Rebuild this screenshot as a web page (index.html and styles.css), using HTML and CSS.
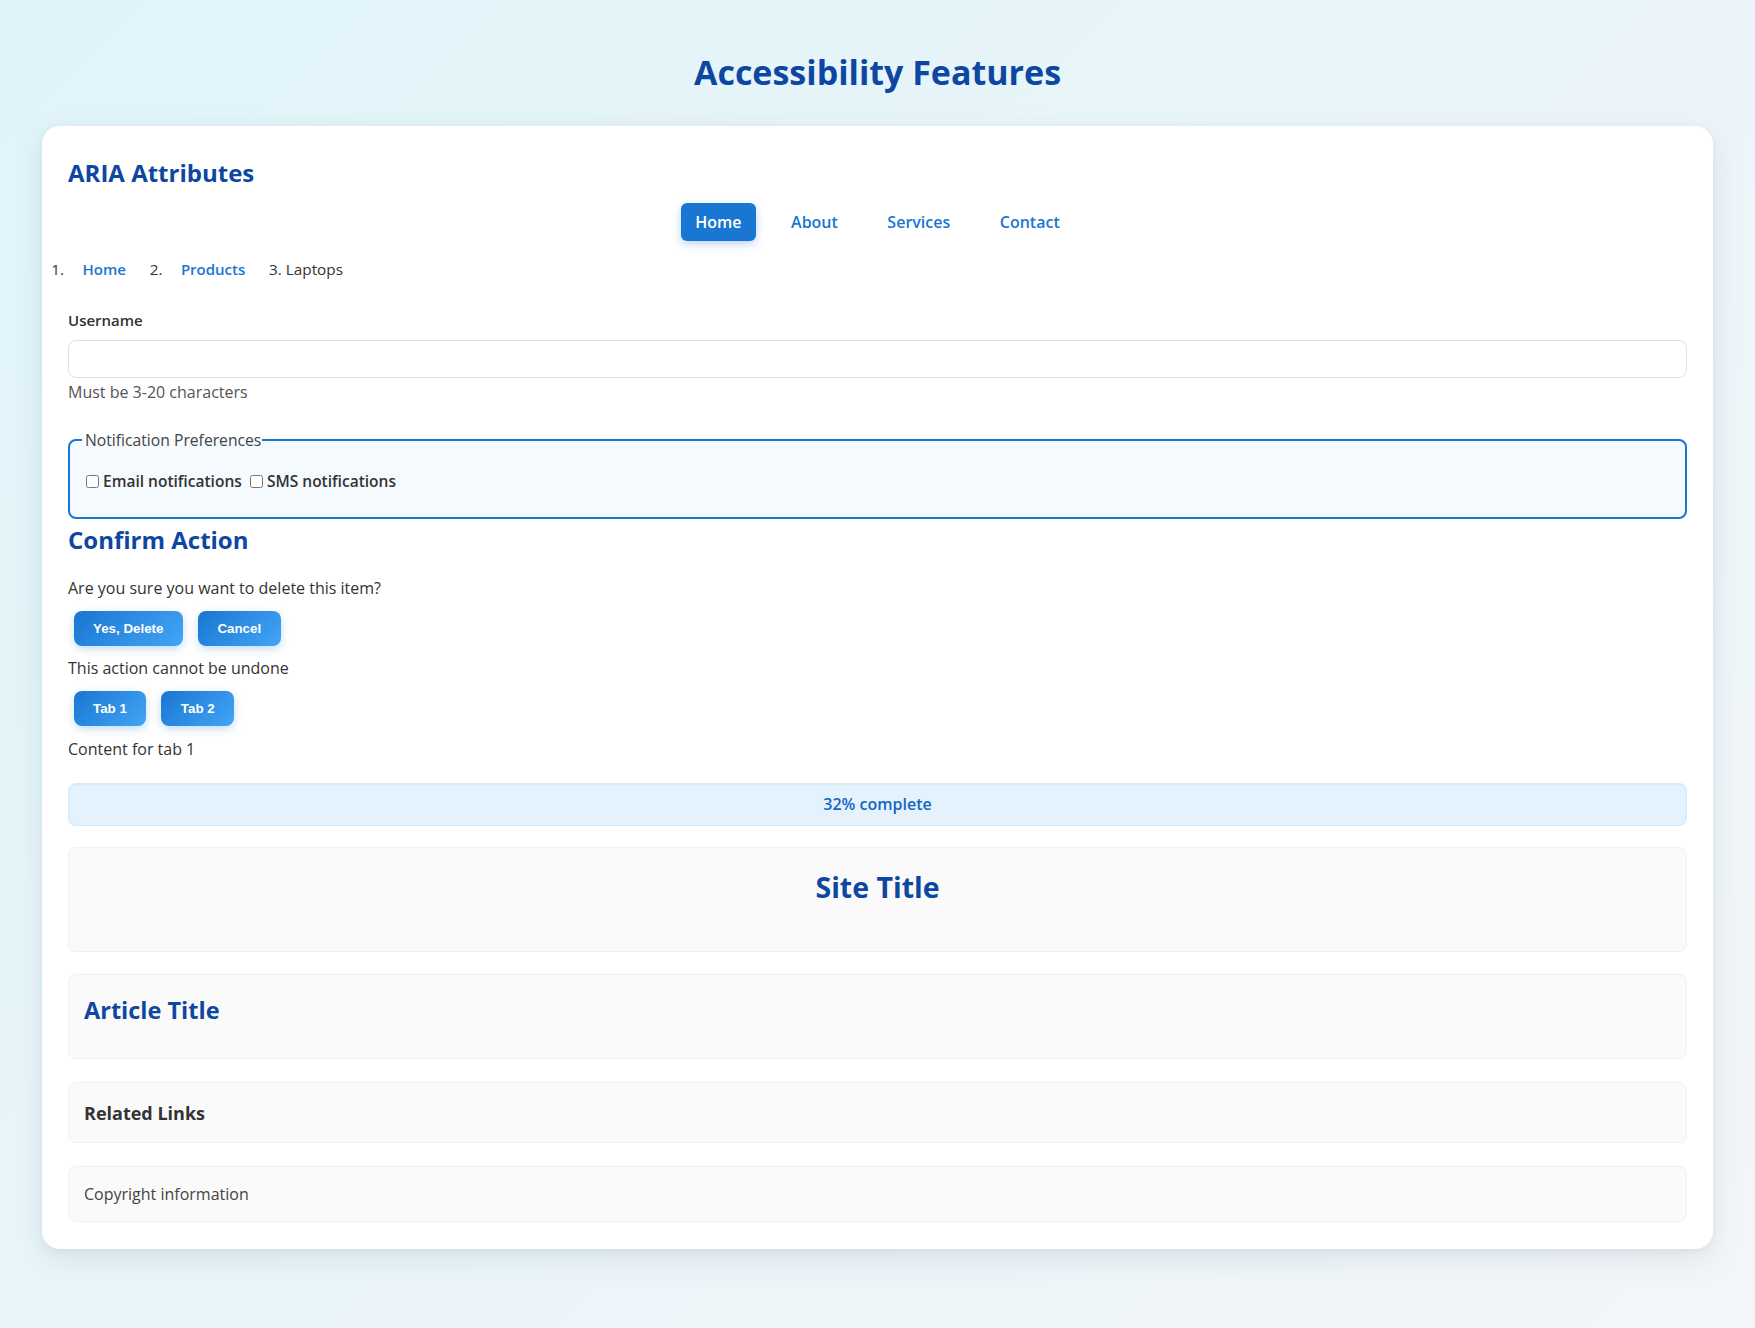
FILE: index.html
```html
<!DOCTYPE html>
<html lang="en">
<head>
<meta charset="utf-8">
<title>Accessibility Features</title>
<link rel="stylesheet" href="styles.css">
</head>
<body>
<h1 class="page-title">Accessibility Features</h1>
<main class="card">
  <h2 class="section-title">ARIA Attributes</h2>
  <nav class="main-nav" aria-label="Main navigation">
    <a class="nav-link active" href="#" aria-current="page">Home</a>
    <a class="nav-link" href="#">About</a>
    <a class="nav-link" href="#">Services</a>
    <a class="nav-link" href="#">Contact</a>
  </nav>
  <nav aria-label="Breadcrumb">
    <ol class="breadcrumb">
      <li><a class="crumb-link" href="#">Home</a></li>
      <li><a class="crumb-link" href="#">Products</a></li>
      <li><span aria-current="page">Laptops</span></li>
    </ol>
  </nav>
  <div class="form-group">
    <label class="field-label" for="username">Username</label>
    <input class="text-input" id="username" type="text" aria-describedby="username-hint">
    <div class="hint" id="username-hint">Must be 3-20 characters</div>
  </div>
  <fieldset class="prefs">
    <legend class="prefs-legend">Notification Preferences</legend>
    <div class="check-row">
      <input class="check" type="checkbox" id="email"><label class="check-label" for="email">Email notifications</label>
      <input class="check" type="checkbox" id="sms"><label class="check-label" for="sms">SMS notifications</label>
    </div>
  </fieldset>
  <div role="alertdialog" aria-labelledby="dlg-title" aria-describedby="dlg-desc">
    <h2 class="section-title confirm-title" id="dlg-title">Confirm Action</h2>
    <p class="text para-1" id="dlg-desc">Are you sure you want to delete this item?</p>
    <div class="btn-row">
      <button class="btn">Yes, Delete</button>
      <button class="btn">Cancel</button>
    </div>
    <p class="text para-2">This action cannot be undone</p>
  </div>
  <div class="btn-row tabs" role="tablist">
    <button class="btn" role="tab" aria-selected="true">Tab 1</button>
    <button class="btn" role="tab" aria-selected="false">Tab 2</button>
  </div>
  <p class="text para-3" role="tabpanel">Content for tab 1</p>
  <div class="progress" role="progressbar" aria-valuenow="32" aria-valuemin="0" aria-valuemax="100">32% complete</div>
  <header class="box site-header">
    <h1 class="site-title">Site Title</h1>
  </header>
  <article class="box article">
    <h2 class="article-title">Article Title</h2>
  </article>
  <aside class="box related">
    <h3 class="related-title">Related Links</h3>
  </aside>
  <footer class="box site-footer">Copyright information</footer>
</main>
</body>
</html>
```

FILE: styles.css
```css
html, body {
  margin: 0;
}
body {
  min-height: 1328px;
  box-sizing: border-box;
  padding: 0 42px 40px;
  background: linear-gradient(135deg, #dff4f9 0%, #eaf5f9 50%, #f3f6f9 100%);
  font-family: "Open Sans", "Noto Sans", sans-serif;
  font-size: 16px;
  color: #333;
}
.page-title {
  margin: 0;
  padding: 51px 0 32px;
  text-align: center;
  font-size: 34px;
  line-height: 43px;
  font-weight: 700;
  color: #0d47a1;
}
.card {
  display: block;
  background: #fff;
  border-radius: 18px;
  padding: 26px 26px 27px;
  box-shadow: 0 10px 30px rgba(40, 70, 100, 0.10), 0 2px 6px rgba(40, 70, 100, 0.05);
}
.section-title {
  margin: 6px 0 0;
  font-size: 24px;
  line-height: 30px;
  font-weight: 700;
  color: #0d47a1;
}
.main-nav {
  margin-top: 14.5px;
  display: flex;
  justify-content: center;
  gap: 21.5px;
}
.nav-link {
  display: block;
  padding: 8px 14px;
  line-height: 22px;
  font-size: 16px;
  font-weight: 600;
  color: #1976d2;
  text-decoration: none;
  border-radius: 6px;
}
.nav-link.active {
  background: #1976d2;
  color: #fff;
  box-shadow: 0 3px 8px rgba(25, 118, 210, 0.3);
}
.breadcrumb {
  margin: 17px 0 0;
  padding: 0;
  display: flex;
  gap: 26px;
  line-height: 22px;
  list-style: decimal outside;
  font-size: 15.3px;
}
.crumb-link {
  padding: 0 14.5px;
  color: #1976d2;
  font-size: 15px;
  font-weight: 600;
  text-decoration: none;
}
.form-group {
  margin-top: 29.5px;
}
.field-label {
  display: block;
  line-height: 22px;
  font-size: 15px;
  font-weight: 600;
  color: #333;
}
.text-input {
  display: block;
  box-sizing: border-box;
  width: 100%;
  height: 38px;
  margin-top: 9px;
  border: 1.5px solid #e0e0e0;
  border-radius: 8px;
  background: #fff;
  font: inherit;
}
.hint {
  margin-top: 2.5px;
  line-height: 22px;
  color: #555;
}
.prefs {
  margin: 26px 0 0;
  padding: 19px 12px 25px;
  border: 2px solid #1976d2;
  border-radius: 8px;
  background: #f5faff;
}
.prefs-legend {
  padding: 0 1px 0 3px;
  line-height: 22px;
  font-size: 15.7px;
  color: #444;
}
.check-row {
  line-height: 22px;
}
.check {
  width: 13px;
  height: 13px;
  margin: 0 4px 0 4px;
  vertical-align: -1px;
}
.check-label {
  font-size: 15.5px;
  font-weight: 600;
  color: #333;
}
.confirm-title {
  margin-top: 6.5px;
}
.text {
  margin: 0;
  line-height: 22px;
}
.para-1 { margin-top: 22px; }
.para-2 { margin-top: 11px; }
.para-3 { margin-top: 11.5px; }
.btn-row {
  display: flex;
  gap: 15px;
  padding-left: 5.5px;
  margin-top: 11.5px;
}
.tabs {
  margin-top: 12.5px;
}
.btn {
  padding: 10px 19.5px;
  border: none;
  border-radius: 8px;
  background: linear-gradient(135deg, #1976d2 0%, #42a5f5 100%);
  color: #fff;
  font-family: "Liberation Sans", Arial, sans-serif;
  font-size: 13.33px;
  line-height: 15px;
  font-weight: 700;
  box-shadow: 0 3px 8px rgba(25, 118, 210, 0.25);
}
.progress {
  margin-top: 23.5px;
  height: 42.5px;
  box-sizing: border-box;
  border: 1px solid #d6e9f8;
  border-radius: 8px;
  background: #e3f2fd;
  display: flex;
  align-items: center;
  justify-content: center;
  color: #1565c0;
  font-weight: 600;
  box-shadow: inset 0 1px 2px rgba(0, 0, 0, 0.05);
}
.box {
  display: block;
  margin-top: 21.5px;
  border: 1px solid #f0f0f0;
  border-radius: 8px;
  background: #fafafa;
  padding-left: 15px;
  padding-right: 15px;
}
.site-header {
  padding-top: 21px;
  padding-bottom: 46px;
  text-align: center;
}
.site-title {
  margin: 0;
  font-size: 28.5px;
  line-height: 36px;
  font-weight: 700;
  color: #0d47a1;
}
.article {
  padding-top: 20px;
  padding-bottom: 33.5px;
}
.article-title {
  margin: 0;
  font-size: 23.5px;
  line-height: 30px;
  font-weight: 700;
  color: #0d47a1;
}
.related {
  margin-top: 22.5px;
  padding-top: 18.5px;
  padding-bottom: 17px;
}
.related-title {
  margin: 0;
  font-size: 18px;
  line-height: 24px;
  font-weight: 700;
  color: #333;
}
.site-footer {
  margin-top: 23px;
  padding-top: 16px;
  padding-bottom: 16px;
  line-height: 22px;
  color: #444;
}
```
